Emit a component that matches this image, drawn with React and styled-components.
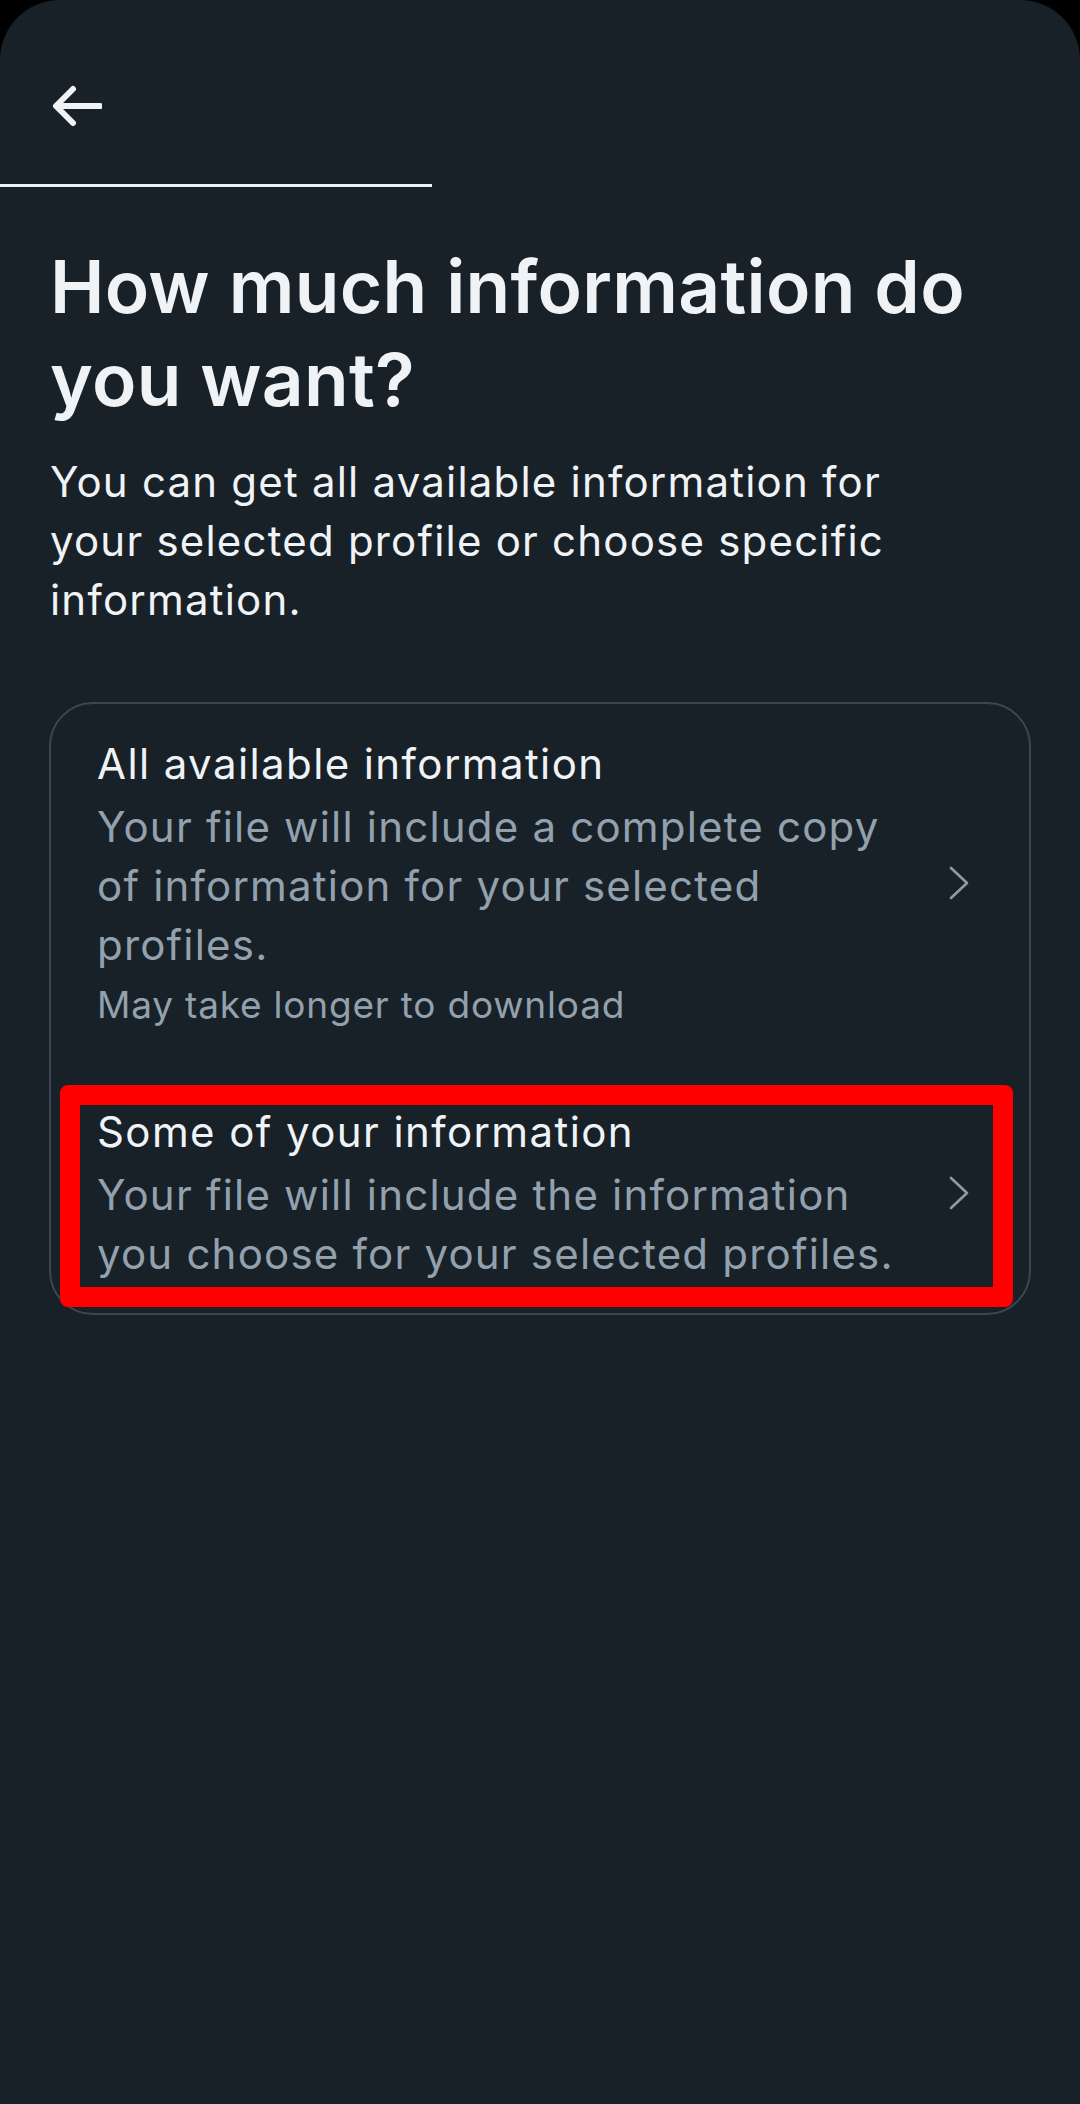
import React from 'react'
import styled, { createGlobalStyle } from 'styled-components'

const GlobalStyle = createGlobalStyle`
  html, body {
    margin: 0;
    padding: 0;
    background: #000;
  }
  * {
    box-sizing: border-box;
  }
`

const Screen = styled.div`
  width: 1080px;
  min-height: 2104px;
  background: #182128;
  border-radius: 60px 60px 0 0;
  font-family: "Inter", "Roboto", sans-serif;
  color: #f0f3f6;
  display: flex;
  flex-direction: column;
`

const Header = styled.div`
  height: 184px;
  padding: 81px 0 0 52px;
`

const BackButton = styled.button`
  width: 50px;
  height: 50px;
  padding: 0;
  border: none;
  background: none;
  color: #f0f3f6;
  cursor: pointer;
  svg {
    display: block;
  }
`

const Progress = styled.div`
  width: 432px;
  height: 3px;
  background: #eef2f5;
`

const Content = styled.div`
  padding: 0 49px 0 50px;
`

const Title = styled.h1`
  margin: 53px 0 0;
  font-size: 73px;
  line-height: 93px;
  font-weight: 600;
  letter-spacing: 0.3px;
`

const Lead = styled.p`
  margin: 26px 0 0;
  max-width: 880px;
  font-size: 42px;
  line-height: 59px;
  font-weight: 400;
  letter-spacing: 1.2px;
`

const Card = styled.div`
  margin: 73px 0 0 -1px;
  border: 2px solid #3a4753;
  border-radius: 44px;
  display: flex;
  flex-direction: column;
  gap: 11px;
`

const Option = styled.div`
  position: relative;
  display: flex;
  align-items: center;
  padding: 30px 60px 30px 46px;
  cursor: pointer;

  ${p => p.$marked && `
    &::after {
      content: "";
      position: absolute;
      top: 13px;
      left: 9px;
      right: 16px;
      bottom: 6px;
      border: 20px solid #ff0000;
      border-radius: 8px;
      pointer-events: none;
    }
  `}
`

const OptionText = styled.div`
  flex: 1;
  max-width: 800px;
  display: flex;
  flex-direction: column;
`

const OptionTitle = styled.div`
  font-size: 42px;
  line-height: 59px;
  font-weight: 400;
  color: #f0f3f6;
  letter-spacing: 1.4px;
`

const OptionDesc = styled.div`
  margin-top: 4px;
  font-size: 42px;
  line-height: 59px;
  color: #93a1ae;
  letter-spacing: 1.2px;
`

const OptionNote = styled.div`
  margin-top: 5px;
  font-size: 37px;
  line-height: 52px;
  color: #93a1ae;
  letter-spacing: 0.8px;
`

const Chevron = styled.svg`
  flex: none;
  margin-left: auto;
  width: 20px;
  height: 34px;
  color: #8d9ba9;
`

const ArrowLeft = () => (
  <svg width="50" height="50" viewBox="0 0 50 50" fill="none" stroke="currentColor" strokeWidth="6" strokeLinecap="round" strokeLinejoin="round">
    <path d="M21 8 L4 25 L21 42" />
    <path d="M5 25 H48" />
  </svg>
)

const ChevronRight = () => (
  <Chevron viewBox="0 0 20 34" fill="none" stroke="currentColor" strokeWidth="2.6" strokeLinecap="round" strokeLinejoin="round">
    <path d="M2 2 L18 17 L2 32" />
  </Chevron>
)

const options = [
  {
    title: 'All available information',
    desc: 'Your file will include a complete copy of information for your selected profiles.',
    note: 'May take longer to download',
  },
  {
    title: 'Some of your information',
    desc: 'Your file will include the information you choose for your selected profiles.',
    marked: true,
  },
]

export default function App() {
  return (
    <>
      <GlobalStyle />
      <Screen>
        <Header>
          <BackButton aria-label="Back">
            <ArrowLeft />
          </BackButton>
        </Header>
        <Progress />
        <Content>
          <Title>How much information do you want?</Title>
          <Lead>
            You can get all available information for your selected profile or choose specific information.
          </Lead>
          <Card>
            {options.map(o => (
              <Option key={o.title} $marked={o.marked}>
                <OptionText>
                  <OptionTitle>{o.title}</OptionTitle>
                  <OptionDesc>{o.desc}</OptionDesc>
                  {o.note && <OptionNote>{o.note}</OptionNote>}
                </OptionText>
                <ChevronRight />
              </Option>
            ))}
          </Card>
        </Content>
      </Screen>
    </>
  )
}
